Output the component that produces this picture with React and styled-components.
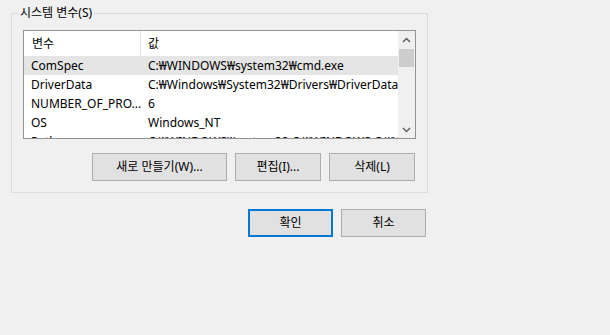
import styled, { createGlobalStyle } from "styled-components";

const GlobalStyle = createGlobalStyle`
    html, body {
        margin: 0;
        padding: 0;
        background: #f0f0f0;
    }
    body {
        font-family: "Noto Sans", "Noto Sans CJK KR", sans-serif;
        font-size: 12px;
        color: #000;
    }
`;

const variables = [
    { name: "ComSpec", value: "C:₩WINDOWS₩system32₩cmd.exe", selected: true },
    { name: "DriverData", value: "C:₩Windows₩System32₩Drivers₩DriverData" },
    { name: "NUMBER_OF_PRO...", value: "6" },
    { name: "OS", value: "Windows_NT" },
    { name: "Path", value: "C:₩WINDOWS₩system32;C:₩WINDOWS;C:₩WINDOWS₩System32₩Wbem" },
];

const Chevron = ({ down }) => (
    <svg width="9" height="6" viewBox="0 0 9 6">
        <path
            d={down ? "M1 1 L4.5 4.5 L8 1" : "M1 5 L4.5 1.5 L8 5"}
            fill="none"
            stroke="#606060"
            strokeWidth="1.5"
        />
    </svg>
);

const App = () => {
    return (
        <Page>
            <GlobalStyle />
            <Group>
                <Legend>시스템 변수(S)</Legend>
                <ListBox>
                    <ListContent>
                        <HeaderRow>
                            <HeaderCell width={117} divider>변수</HeaderCell>
                            <HeaderCell>값</HeaderCell>
                        </HeaderRow>
                        {variables.map((v) => (
                            <Row key={v.name} selected={v.selected}>
                                <NameCell>{v.name}</NameCell>
                                <ValueCell>{v.value}</ValueCell>
                            </Row>
                        ))}
                    </ListContent>
                    <ScrollBar>
                        <ArrowButton><Chevron /></ArrowButton>
                        <Track>
                            <Thumb />
                        </Track>
                        <ArrowButton><Chevron down /></ArrowButton>
                    </ScrollBar>
                </ListBox>
                <ButtonRow>
                    <Button width={135}>새로 만들기(W)...</Button>
                    <Button width={86}>편집(I)...</Button>
                    <Button width={86}>삭제(L)</Button>
                </ButtonRow>
            </Group>
            <DialogButtons>
                <Button width={85} primary>확인</Button>
                <Button width={85}>취소</Button>
            </DialogButtons>
        </Page>
    );
};

const Page = styled.div`
    width: 610px;
    height: 335px;
    padding: 13px 0 0 11px;
    box-sizing: border-box;
    overflow: hidden;
`;

const Group = styled.section`
    position: relative;
    width: 417px;
    height: 180px;
    box-sizing: border-box;
    border: 1px solid #dcdcdc;
    padding: 16px 11px 0 11px;
    display: flex;
    flex-direction: column;
`;

const Legend = styled.span`
    position: absolute;
    top: -9px;
    left: 6px;
    padding: 0 2px;
    background: #f0f0f0;
    line-height: 16px;
`;

const ListBox = styled.div`
    width: 393px;
    height: 109px;
    box-sizing: border-box;
    border: 1px solid #939393;
    background: #fff;
    display: flex;
    overflow: hidden;
`;

const ListContent = styled.div`
    flex: 1;
    overflow: hidden;
`;

const HeaderRow = styled.div`
    display: flex;
    height: 25px;
    align-items: stretch;
`;

const HeaderCell = styled.div`
    width: ${(p) => (p.width ? p.width + "px" : "auto")};
    flex: ${(p) => (p.width ? "none" : "1")};
    box-sizing: border-box;
    padding-left: ${(p) => (p.divider ? "8px" : "7px")};
    border-right: ${(p) => (p.divider ? "1px solid #e5e5e5" : "none")};
    display: flex;
    align-items: center;
    line-height: 16px;
`;

const Row = styled.div`
    display: flex;
    height: 19px;
    align-items: center;
    background: ${(p) => (p.selected ? "#e5e5e5" : "transparent")};
    white-space: nowrap;
`;

const NameCell = styled.div`
    width: 117px;
    flex: none;
    box-sizing: border-box;
    padding-left: 7px;
    overflow: hidden;
`;

const ValueCell = styled.div`
    flex: 1;
    padding-left: 7px;
    overflow: hidden;
`;

const ScrollBar = styled.div`
    width: 17px;
    flex: none;
    background: #f0f0f0;
    display: flex;
    flex-direction: column;
`;

const ArrowButton = styled.div`
    height: 17px;
    display: flex;
    align-items: center;
    justify-content: center;
`;

const Track = styled.div`
    flex: 1;
    padding-top: 1px;
`;

const Thumb = styled.div`
    height: 18px;
    margin: 0 1px;
    background: #cdcdcd;
`;

const ButtonRow = styled.div`
    display: flex;
    justify-content: flex-end;
    gap: 8px;
    margin-top: 14px;
    width: 392px;
`;

const DialogButtons = styled.div`
    display: flex;
    justify-content: flex-end;
    gap: 8px;
    width: 415px;
    margin-top: 16px;
`;

const Button = styled.button`
    width: ${(p) => p.width}px;
    height: 28px;
    box-sizing: border-box;
    background: #e1e1e1;
    border: 1px solid ${(p) => (p.primary ? "#0078d7" : "#adadad")};
    box-shadow: ${(p) => (p.primary ? "inset 0 0 0 1px #0078d7" : "none")};
    font-family: inherit;
    font-size: 12px;
    color: #000;
    padding: 0;
    line-height: 16px;
`;

export default App;
